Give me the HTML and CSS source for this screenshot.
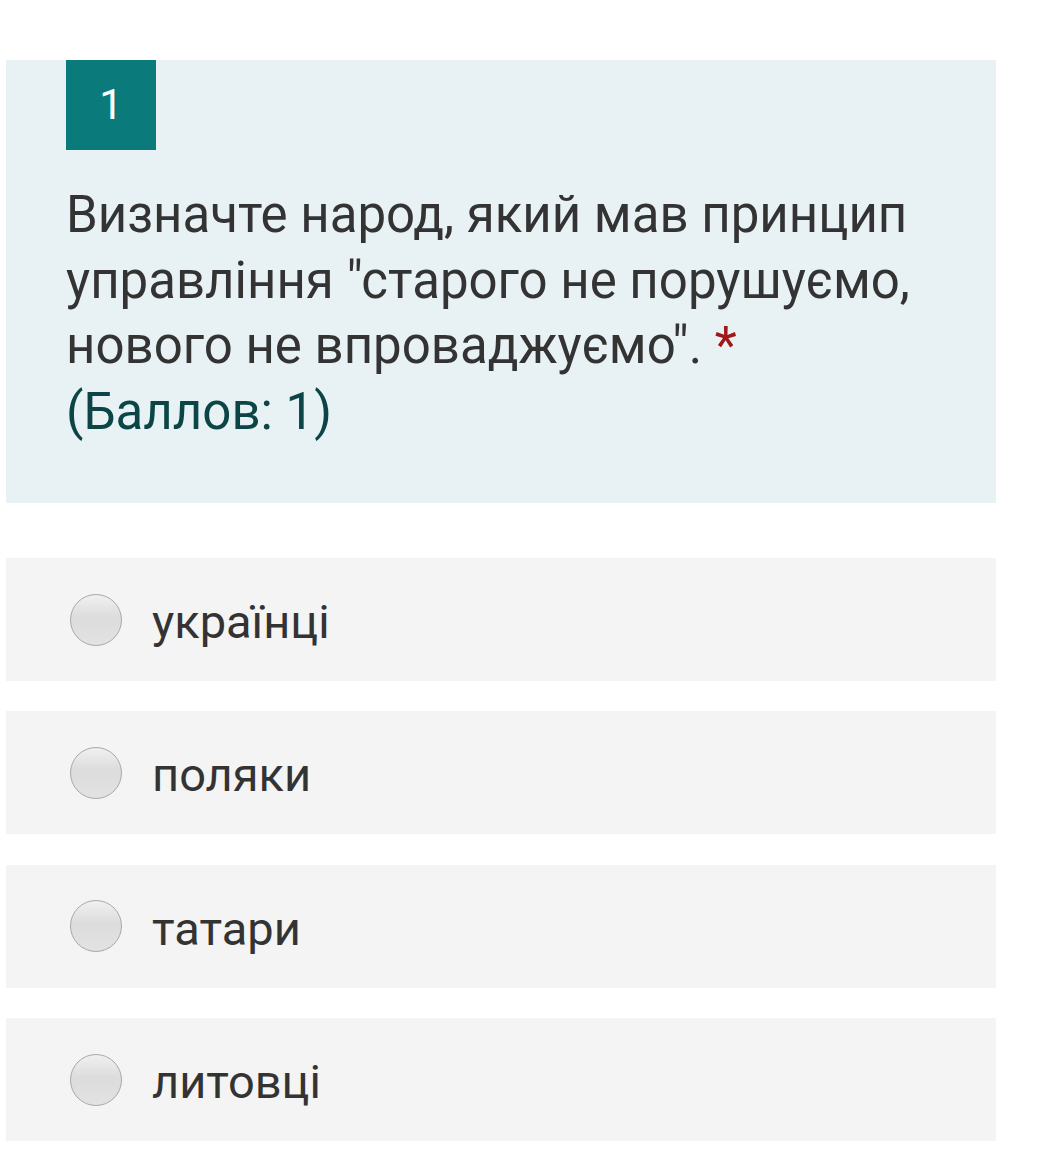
FILE: index.html
```html
<!DOCTYPE html>
<html lang="uk">
<head>
<meta charset="utf-8">
<link rel="stylesheet" href="styles.css">
</head>
<body>
<div class="page">
  <section class="question">
    <div class="badge">1</div>
    <div class="qtext">Визначте народ, який мав принцип управління "старого не порушуємо, нового не впроваджуємо".&nbsp;<span class="req">*</span><br><span class="points">(Баллов: 1)</span></div>
  </section>
  <div class="options">
    <label class="option"><span class="radio"></span><span class="otext">українці</span></label>
    <label class="option"><span class="radio"></span><span class="otext">поляки</span></label>
    <label class="option"><span class="radio"></span><span class="otext">татари</span></label>
    <label class="option"><span class="radio"></span><span class="otext">литовці</span></label>
  </div>
</div>
</body>
</html>
```

FILE: styles.css
```css
html, body {
  margin: 0;
  padding: 0;
  background: #ffffff;
}
body {
  font-family: Roboto, "Noto Sans", sans-serif;
  color: #333333;
}
.page {
  width: 990px;
  margin-left: 6px;
  padding-top: 60px;
}
.question {
  background: #e8f1f4;
  padding: 0 56px 0 60px;
  height: 443px;
  box-sizing: border-box;
}
.badge {
  width: 90px;
  height: 90px;
  background: #0a7a7a;
  color: #ffffff;
  font-size: 42px;
  display: flex;
  align-items: center;
  justify-content: center;
  line-height: 1;
}
.qtext {
  margin-top: 32px;
  font-size: 51px;
  line-height: 65.5px;
  color: #333333;
}
.req {
  color: #a01818;
}
.points {
  color: #0b4545;
}
.options {
  margin-top: 55px;
  display: flex;
  flex-direction: column;
  gap: 30.4px;
}
.option {
  background: #f4f4f4;
  height: 123px;
  display: flex;
  align-items: center;
  padding-left: 64px;
  box-sizing: border-box;
}
.radio {
  width: 50px;
  height: 50px;
  border-radius: 50%;
  border: 1px solid #a9a9a9;
  background: linear-gradient(#f0f0f0, #dcdcdc 45%, #e2e2e2);
  flex: none;
}
.otext {
  margin-left: 30px;
  font-size: 47px;
  color: #333333;
  position: relative;
  top: 2px;
}
```
